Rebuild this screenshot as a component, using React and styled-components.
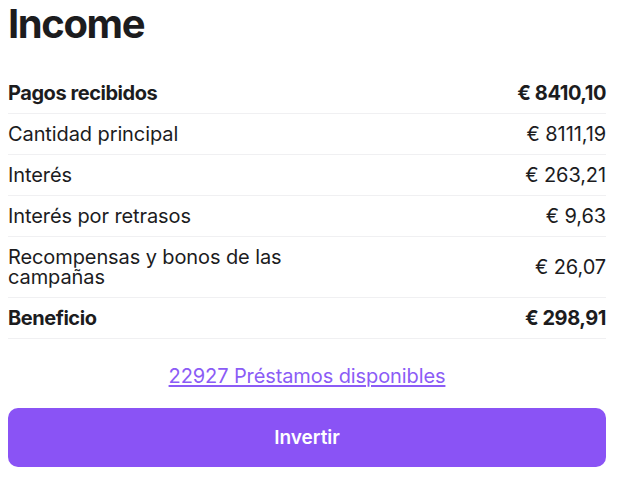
import styled, { createGlobalStyle } from "styled-components";

const GlobalStyle = createGlobalStyle`
  body {
    margin: 0;
    background: #fff;
    font-family: Inter, "Noto Sans", sans-serif;
    color: #1c1c1e;
  }
`;

const Page = styled.div`
  padding: 0 35px 0 8px;
`;

const Title = styled.h1`
  margin: 0 0 25px;
  font-size: 40px;
  line-height: 48px;
  font-weight: 700;
  letter-spacing: -1.4px;
`;

const Table = styled.div`
  display: flex;
  flex-direction: column;
`;

const Row = styled.div`
  display: flex;
  justify-content: space-between;
  align-items: center;
  padding: 10px 0;
  border-bottom: 1px solid #f0f0f2;
  font-size: 20px;
  line-height: 20px;
  font-weight: ${(p) => (p.$bold ? 700 : 400)};
  letter-spacing: ${(p) => (p.$bold ? "-0.45px" : "-0.1px")};
`;

const Label = styled.span`
  max-width: 50%;
`;

const Amount = styled.span`
  text-align: right;
  white-space: nowrap;
`;

const LinkWrap = styled.div`
  display: flex;
  justify-content: center;
  margin-top: 25px;
`;

const LoansLink = styled.a`
  font-size: 20px;
  line-height: 24px;
  color: #8b5cf6;
  letter-spacing: -0.1px;
  text-decoration: underline;
  text-underline-offset: 2px;
  cursor: pointer;
`;

const InvestButton = styled.button`
  display: block;
  width: 100%;
  height: 59px;
  margin-top: 20px;
  border: none;
  border-radius: 10px;
  background: #8a53f5;
  color: #fff;
  font-family: Inter, sans-serif;
  font-size: 19px;
  font-weight: 600;
  cursor: pointer;
`;

const rows = [
  { label: "Pagos recibidos", amount: "€ 8410,10", bold: true },
  { label: "Cantidad principal", amount: "€ 8111,19" },
  { label: "Interés", amount: "€ 263,21" },
  { label: "Interés por retrasos", amount: "€ 9,63" },
  { label: "Recompensas y bonos de las campañas", amount: "€ 26,07" },
  { label: "Beneficio", amount: "€ 298,91", bold: true },
];

export default function App() {
  return (
    <>
      <GlobalStyle />
      <Page>
        <Title>Income</Title>
        <Table>
          {rows.map((r) => (
            <Row key={r.label} $bold={r.bold}>
              <Label>{r.label}</Label>
              <Amount>{r.amount}</Amount>
            </Row>
          ))}
        </Table>
        <LinkWrap>
          <LoansLink>22927 Préstamos disponibles</LoansLink>
        </LinkWrap>
        <InvestButton>Invertir</InvestButton>
      </Page>
    </>
  );
}
